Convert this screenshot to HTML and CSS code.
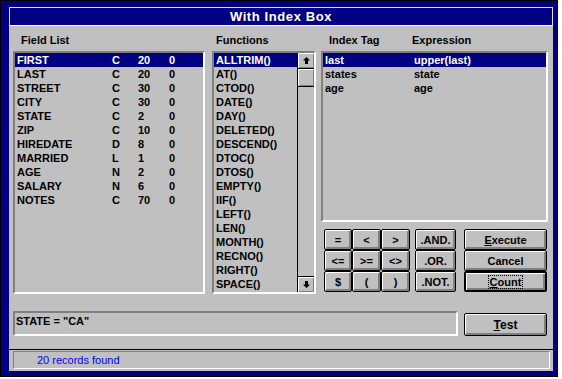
FILE: index.html
```html
<!DOCTYPE html>
<html lang="en">
<head>
  <meta charset="UTF-8">
  <title>With Index Box</title>
  <link rel="stylesheet" href="styles.css">
</head>
<body>
  <div class="window">
    <div class="title-bar">With Index Box</div>
    <div class="client">
      <div class="panes">
        <div class="col col-fields">
          <div class="label">Field List</div>
          <div class="list fields">
            <div class="row field selected"><span>FIRST</span><span>C</span><span>20</span><span>0</span></div>
            <div class="row field"><span>LAST</span><span>C</span><span>20</span><span>0</span></div>
            <div class="row field"><span>STREET</span><span>C</span><span>30</span><span>0</span></div>
            <div class="row field"><span>CITY</span><span>C</span><span>30</span><span>0</span></div>
            <div class="row field"><span>STATE</span><span>C</span><span>2</span><span>0</span></div>
            <div class="row field"><span>ZIP</span><span>C</span><span>10</span><span>0</span></div>
            <div class="row field"><span>HIREDATE</span><span>D</span><span>8</span><span>0</span></div>
            <div class="row field"><span>MARRIED</span><span>L</span><span>1</span><span>0</span></div>
            <div class="row field"><span>AGE</span><span>N</span><span>2</span><span>0</span></div>
            <div class="row field"><span>SALARY</span><span>N</span><span>6</span><span>0</span></div>
            <div class="row field"><span>NOTES</span><span>C</span><span>70</span><span>0</span></div>
          </div>
        </div>

        <div class="col col-funcs">
          <div class="label">Functions</div>
          <div class="list funcs">
            <div class="func-items">
              <div class="row selected">ALLTRIM()</div>
              <div class="row">AT()</div>
              <div class="row">CTOD()</div>
              <div class="row">DATE()</div>
              <div class="row">DAY()</div>
              <div class="row">DELETED()</div>
              <div class="row">DESCEND()</div>
              <div class="row">DTOC()</div>
              <div class="row">DTOS()</div>
              <div class="row">EMPTY()</div>
              <div class="row">IIF()</div>
              <div class="row">LEFT()</div>
              <div class="row">LEN()</div>
              <div class="row">MONTH()</div>
              <div class="row">RECNO()</div>
              <div class="row">RIGHT()</div>
              <div class="row">SPACE()</div>
            </div>
            <div class="scrollbar">
              <div class="sb-btn">
                <svg width="7" height="7" viewBox="0 0 7 7"><polygon points="3.5,0 7,3.5 5,3.5 5,7 2,7 2,3.5 0,3.5" fill="#000"/></svg>
              </div>
              <div class="sb-thumb"></div>
              <div class="sb-track"></div>
              <div class="sb-btn sb-down">
                <svg width="7" height="7" viewBox="0 0 7 7"><polygon points="3.5,7 7,3.5 5,3.5 5,0 2,0 2,3.5 0,3.5" fill="#000"/></svg>
              </div>
            </div>
          </div>
        </div>

        <div class="col col-index">
          <div class="label index-labels"><span class="tag-col">Index Tag</span><span>Expression</span></div>
          <div class="list indexes">
            <div class="row idx selected"><span>last</span><span>upper(last)</span></div>
            <div class="row idx"><span>states</span><span>state</span></div>
            <div class="row idx"><span>age</span><span>age</span></div>
          </div>
          <div class="buttons">
            <div class="ops">
              <button class="btn">=</button>
              <button class="btn">&lt;</button>
              <button class="btn">&gt;</button>
              <button class="btn">&lt;=</button>
              <button class="btn">&gt;=</button>
              <button class="btn">&lt;&gt;</button>
              <button class="btn">$</button>
              <button class="btn">(</button>
              <button class="btn">)</button>
            </div>
            <div class="logic">
              <button class="btn">.AND.</button>
              <button class="btn">.OR.</button>
              <button class="btn">.NOT.</button>
            </div>
            <div class="actions">
              <button class="btn"><u>E</u>xecute</button>
              <button class="btn">Cancel</button>
              <button class="btn default"><span class="focus"><u>C</u>ount</span></button>
            </div>
          </div>
        </div>
      </div>

      <div class="expr-row">
        <div class="expr">STATE = "CA"</div>
        <button class="btn test"><u>T</u>est</button>
      </div>

      <div class="status-bar">
        <div class="status">20 records found</div>
      </div>
    </div>
  </div>
</body>
</html>
```

FILE: styles.css
```css
* {
  box-sizing: border-box;
}

body {
  margin: 0;
  background: #fff;
  font-family: "Liberation Sans", Arial, sans-serif;
  font-size: 11px;
  font-weight: bold;
  color: #000;
}

.window {
  width: 558px;
  height: 377px;
  border: 1px solid #000;
  background: #000080;
  padding: 6px 4px 5px 8px;
}

.title-bar {
  height: 19px;
  border: 1px solid #e0e0e0;
  border-bottom-color: #fff;
  color: #fff;
  font-size: 13px;
  line-height: 17px;
  text-align: center;
  letter-spacing: 0.6px;
}

.client {
  height: 345px;
  background: #c0c0c0;
  display: flex;
  flex-direction: column;
}

/* top part: three lists */
.panes {
  display: flex;
  padding: 0 5px 0 4px;
}

.col {
  display: flex;
  flex-direction: column;
}

.col-fields { width: 192px; }
.col-funcs { width: 104px; margin-left: 7px; }
.col-index { width: 227px; margin-left: 5px; }

.label {
  height: 25px;
  padding-top: 8px;
  line-height: 13px;
  padding-left: 8px;
}

.col-funcs .label {
  padding-left: 4px;
}

.index-labels {
  display: flex;
}

.tag-col {
  width: 83px;
}

.list {
  border: 2px solid;
  border-color: #808080 #fff #fff #808080;
  background: #c0c0c0;
}

.fields, .funcs {
  height: 243px;
}

.indexes {
  height: 171px;
}

.row {
  height: 14px;
  line-height: 14px;
  padding-left: 2px;
  white-space: nowrap;
}

.row.selected {
  background: #000080;
  color: #fff;
}

.field {
  display: grid;
  grid-template-columns: 95px 26px 31px 1fr;
}

.idx {
  display: grid;
  grid-template-columns: 89px 1fr;
}

.funcs {
  display: flex;
}

.func-items {
  flex: 1;
  padding-left: 0;
}

.scrollbar {
  width: 17px;
  border-left: 1px solid #000;
  display: flex;
  flex-direction: column;
}

.sb-btn {
  height: 16px;
  border-bottom: 1px solid #000;
  background: #c0c0c0;
  box-shadow: inset 1px 1px #fff, inset -1px -1px #808080;
  display: flex;
  align-items: center;
  justify-content: center;
}

.sb-down {
  border-bottom: none;
  border-top: 1px solid #000;
}

.sb-thumb {
  height: 18px;
  border-bottom: 1px solid #000;
  background: #c0c0c0;
  box-shadow: inset 1px 1px #fff, inset -1px -1px #808080;
}

.sb-track {
  flex: 1;
}

/* buttons */
.btn {
  font: inherit;
  color: #000;
  background: #c0c0c0;
  border: 1px solid #000;
  border-radius: 2px;
  box-shadow: inset 1px 1px #fff, inset -1px -1px #808080, inset -2px -2px #808080;
  padding: 0;
  height: 21px;
  line-height: 18px;
  text-align: center;
}

.buttons {
  display: flex;
  margin-top: 7px;
}

.ops {
  margin-left: 3px;
  width: 86px;
  display: grid;
  grid-template-columns: 28px 29px 29px;
  grid-auto-rows: 21px;
}

.logic {
  margin-left: 5px;
  width: 41px;
  display: flex;
  flex-direction: column;
}

.actions {
  margin-left: 8px;
  width: 83px;
  display: flex;
  flex-direction: column;
}

.btn.default {
  border: 2px solid #000;
}

.focus {
  outline: 1px dotted #000;
  padding: 0 1px;
}

/* expression row */
.expr-row {
  display: flex;
  align-items: flex-start;
  margin-top: 17px;
  padding-left: 4px;
}

.expr {
  width: 445px;
  height: 25px;
  border: 2px solid;
  border-color: #808080 #fff #fff #808080;
  padding: 2px 0 0 1px;
  line-height: 13px;
}

.btn.test {
  margin-left: 6px;
  margin-top: 2px;
  width: 83px;
  height: 23px;
  font-size: 12px;
}

/* status */
.status-bar {
  margin-top: 13px;
  border-top: 1px solid #000;
  padding: 1px 3px 0 4px;
}

.status {
  height: 18px;
  border: 1px solid;
  border-color: #808080 #fff #fff #808080;
  padding-left: 23px;
  line-height: 16px;
  font-weight: normal;
  color: #0000ff;
}
```
